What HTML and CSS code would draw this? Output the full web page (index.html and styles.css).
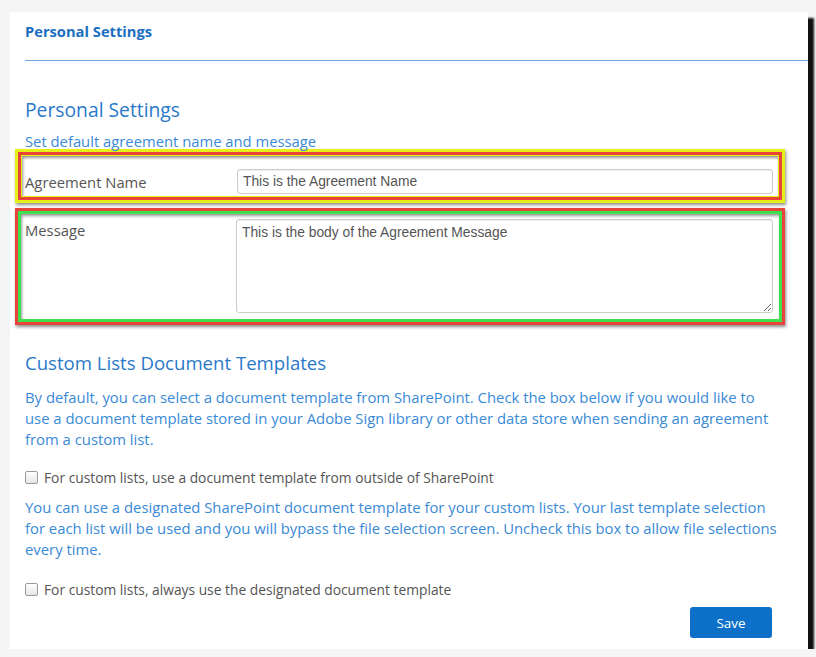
FILE: index.html
```html
<!DOCTYPE html>
<html>
<head>
  <meta charset="utf-8">
  <meta name="viewport" content="width=device-width">
  <title>Personal Settings</title>
  <link rel="stylesheet" href="styles.css">
</head>
<body>
  <section class="panel">
    <div class="panelHead">Personal Settings</div>
    <div class="panelBody">
      <h2 class="title">Personal Settings</h2>
      <p class="subtitle">Set default agreement name and message</p>

      <div class="mark markYellow">
        <div class="markInner">
          <div class="formRow rowName">
            <label class="formLabel" for="agName">Agreement Name</label>
            <input class="formInput" id="agName" type="text" value="This is the Agreement Name">
          </div>
        </div>
      </div>

      <div class="mark markRed">
        <div class="markInner">
          <div class="formRow rowMsg">
            <label class="formLabel" for="agMsg">Message</label>
            <textarea class="formInput formArea" id="agMsg">This is the body of the Agreement Message</textarea>
          </div>
        </div>
      </div>

      <h3 class="section">Custom Lists Document Templates</h3>
      <p class="note noteFirst">By default, you can select a document template from SharePoint. Check the box below if you would like to use a document template stored in your Adobe Sign library or other data store when sending an agreement from a custom list.</p>
      <label class="check checkFirst"><input type="checkbox"> For custom lists, use a document template from outside of SharePoint</label>
      <p class="note noteSecond">You can use a designated SharePoint document template for your custom lists. Your last template selection for each list will be used and you will bypass the file selection screen. Uncheck this box to allow file selections every time.</p>
      <label class="check checkSecond"><input type="checkbox"> For custom lists, always use the designated document template</label>

      <div class="actions">
        <button class="btnSave">Save</button>
      </div>
    </div>
  </section>
</body>
</html>
```

FILE: styles.css
```css
body {
  margin: 0;
  background-color: #f5f5f5;
  font-family: "Open Sans", "Noto Sans", sans-serif;
}

.panel {
  box-sizing: border-box;
  width: 798px;
  height: 637px;
  margin: 12px 0 0 10px;
  background-color: #ffffff;
  box-shadow: 6px 6px 2px #111111;
}

.panelHead {
  margin-left: 15px;
  padding: 9px 0 19px;
  line-height: 20px;
  font-size: 14.7px;
  font-weight: 700;
  color: #1b6ec2;
  border-bottom: 1px solid #6ea6da;
}

.panelBody {
  padding: 0 28px 0 15px;
}

.title {
  margin: 36px 0 0;
  font-size: 19.3px;
  line-height: 26px;
  font-weight: 400;
  color: #2a79c9;
}

.subtitle {
  margin: 9px 0 0;
  font-size: 14.8px;
  line-height: 18px;
  color: #3a8ad6;
}

/* highlight frames around the form rows */
.mark {
  margin: 0 -5px 0 -10px;
  box-shadow: 1px 2px 3px rgba(0, 0, 0, 0.45);
}
.markYellow {
  margin-top: -1px;
  border: 3px solid #e4f016;
}
.markYellow .markInner {
  border: 3px solid #e8443c;
}
.markYellow .formRow {
  border: 1px solid #e4f016;
}
.markRed {
  margin-top: 5px;
  border: 3px solid #e8443c;
}
.markRed .markInner {
  border: 3px solid #3ee04c;
}

.formRow {
  display: flex;
  box-shadow: inset 1px 2px 3px rgba(0, 0, 0, 0.4);
  background-color: #ffffff;
}
.rowName {
  align-items: center;
  padding: 13px 5px 2px 3px;
}
.rowMsg {
  align-items: flex-start;
  padding: 5px 6px 6px 4px;
}

.formLabel {
  width: 212px;
  flex-shrink: 0;
  font-size: 14.8px;
  line-height: 20px;
  color: #555555;
}
.rowMsg .formLabel {
  width: 211px;
  line-height: 22px;
}

.formInput {
  box-sizing: border-box;
  flex: 1;
  height: 25px;
  padding: 0 5px;
  font-family: "Liberation Sans", Arial, sans-serif;
  font-size: 13.8px;
  color: #555555;
  border: 1px solid #cccccc;
  border-radius: 3px;
  box-shadow: inset 0 1px 1px rgba(0, 0, 0, 0.075);
  background-color: #ffffff;
}
.formArea {
  height: 94px;
  padding: 5px;
  resize: vertical;
  line-height: 16px;
}

.section {
  margin: 26px 0 0;
  font-size: 18.6px;
  line-height: 24px;
  font-weight: 400;
  color: #2a79c9;
}

.note {
  margin: 0;
  font-size: 14.85px;
  line-height: 21px;
  color: #3a8ad6;
}
.noteFirst {
  margin-top: 12px;
}
.noteSecond {
  margin-top: 10px;
}

.check {
  display: flex;
  align-items: center;
  height: 20px;
  font-size: 13.8px;
  color: #555555;
}
.checkFirst {
  margin-top: 17px;
}
.checkSecond {
  margin-top: 19px;
}
.check input {
  appearance: none;
  box-sizing: border-box;
  width: 13px;
  height: 13px;
  margin: 0 6px 0 0;
  border: 1px solid #9a9a9a;
  border-radius: 2px;
  background: linear-gradient(#ffffff, #e6e6e6);
}

.actions {
  display: flex;
  justify-content: flex-end;
  margin-top: 8px;
  padding-right: 8px;
}
.btnSave {
  width: 82px;
  height: 31px;
  border: none;
  border-radius: 3px;
  background-color: #0c6fc8;
  color: #ffffff;
  font-family: "Open Sans", sans-serif;
  font-size: 13.5px;
  cursor: pointer;
}
```
